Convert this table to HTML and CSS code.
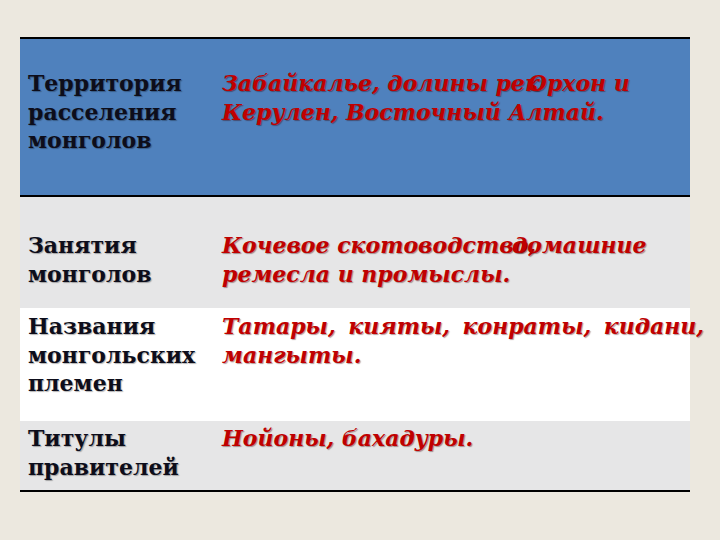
FILE: index.html
```html
<!DOCTYPE html>
<html lang="ru">
<head>
<meta charset="utf-8">
<title>Монголы</title>
<link rel="stylesheet" href="styles.css">
</head>
<body>
<div class="slide">
  <div class="table">
    <div class="row row-head">
      <div class="cell label">Территория<br>расселения<br>монголов</div>
      <div class="cell value">Забайкалье, долины ре<span class="k">к</span><span class="o">О</span>рхон и<br>Керулен, Восточный Алтай.</div>
    </div>
    <div class="row row-2">
      <div class="cell label">Занятия<br>монголов</div>
      <div class="cell value">Кочевое скотоводств<span class="k">о,</span><span class="o2">д</span>омашние<br>ремесла и промыслы.</div>
    </div>
    <div class="row row-3">
      <div class="cell label">Названия<br>монгольских<br>племен</div>
      <div class="cell value"><span class="wide">Татары, кияты, конраты, кидани,</span><br>мангыты.</div>
    </div>
    <div class="row row-4">
      <div class="cell label">Титулы<br>правителей</div>
      <div class="cell value">Нойоны, бахадуры.</div>
    </div>
  </div>
</div>
</body>
</html>
```
FILE: styles.css
```css
html, body {
  margin: 0;
  padding: 0;
  background: #ece8df;
}

.slide {
  width: 720px;
  height: 540px;
  padding-top: 37px;
  box-sizing: border-box;
}

.table {
  margin-left: 20px;
  width: 670px;
  border-top: 2px solid #000;
  border-bottom: 2px solid #000;
}

.row {
  display: grid;
  grid-template-columns: 194px 476px;
  box-sizing: border-box;
}

.row-head {
  background: #4f81bd;
  height: 158px;
  padding-top: 30px;
  border-bottom: 2px solid #000;
}

.row-2 {
  background: #e6e6e7;
  height: 111px;
  padding-top: 34px;
}

.row-3 {
  background: #ffffff;
  height: 113px;
  padding-top: 4px;
}

.row-4 {
  background: #e6e6e7;
  height: 69px;
  padding-top: 3px;
}

.cell {
  font-family: "DejaVu Serif", "Liberation Serif", serif;
  font-size: 22px;
  line-height: 28.5px;
  font-weight: bold;
  white-space: nowrap;
}

.label {
  padding-left: 8px;
  color: #0d0d1a;
  text-shadow: 1px 1px 1px rgba(0, 0, 0, 0.3);
}

.value {
  padding-left: 8px;
  color: #c00000;
  font-style: italic;
  text-shadow: 1px 1px 1px rgba(60, 0, 0, 0.4);
}

.wide {
  word-spacing: 5px;
}

.k {
  display: inline-block;
}

.o {
  display: inline-block;
  margin-left: -12px;
}

.o2 {
  display: inline-block;
  margin-left: -24px;
}
```
